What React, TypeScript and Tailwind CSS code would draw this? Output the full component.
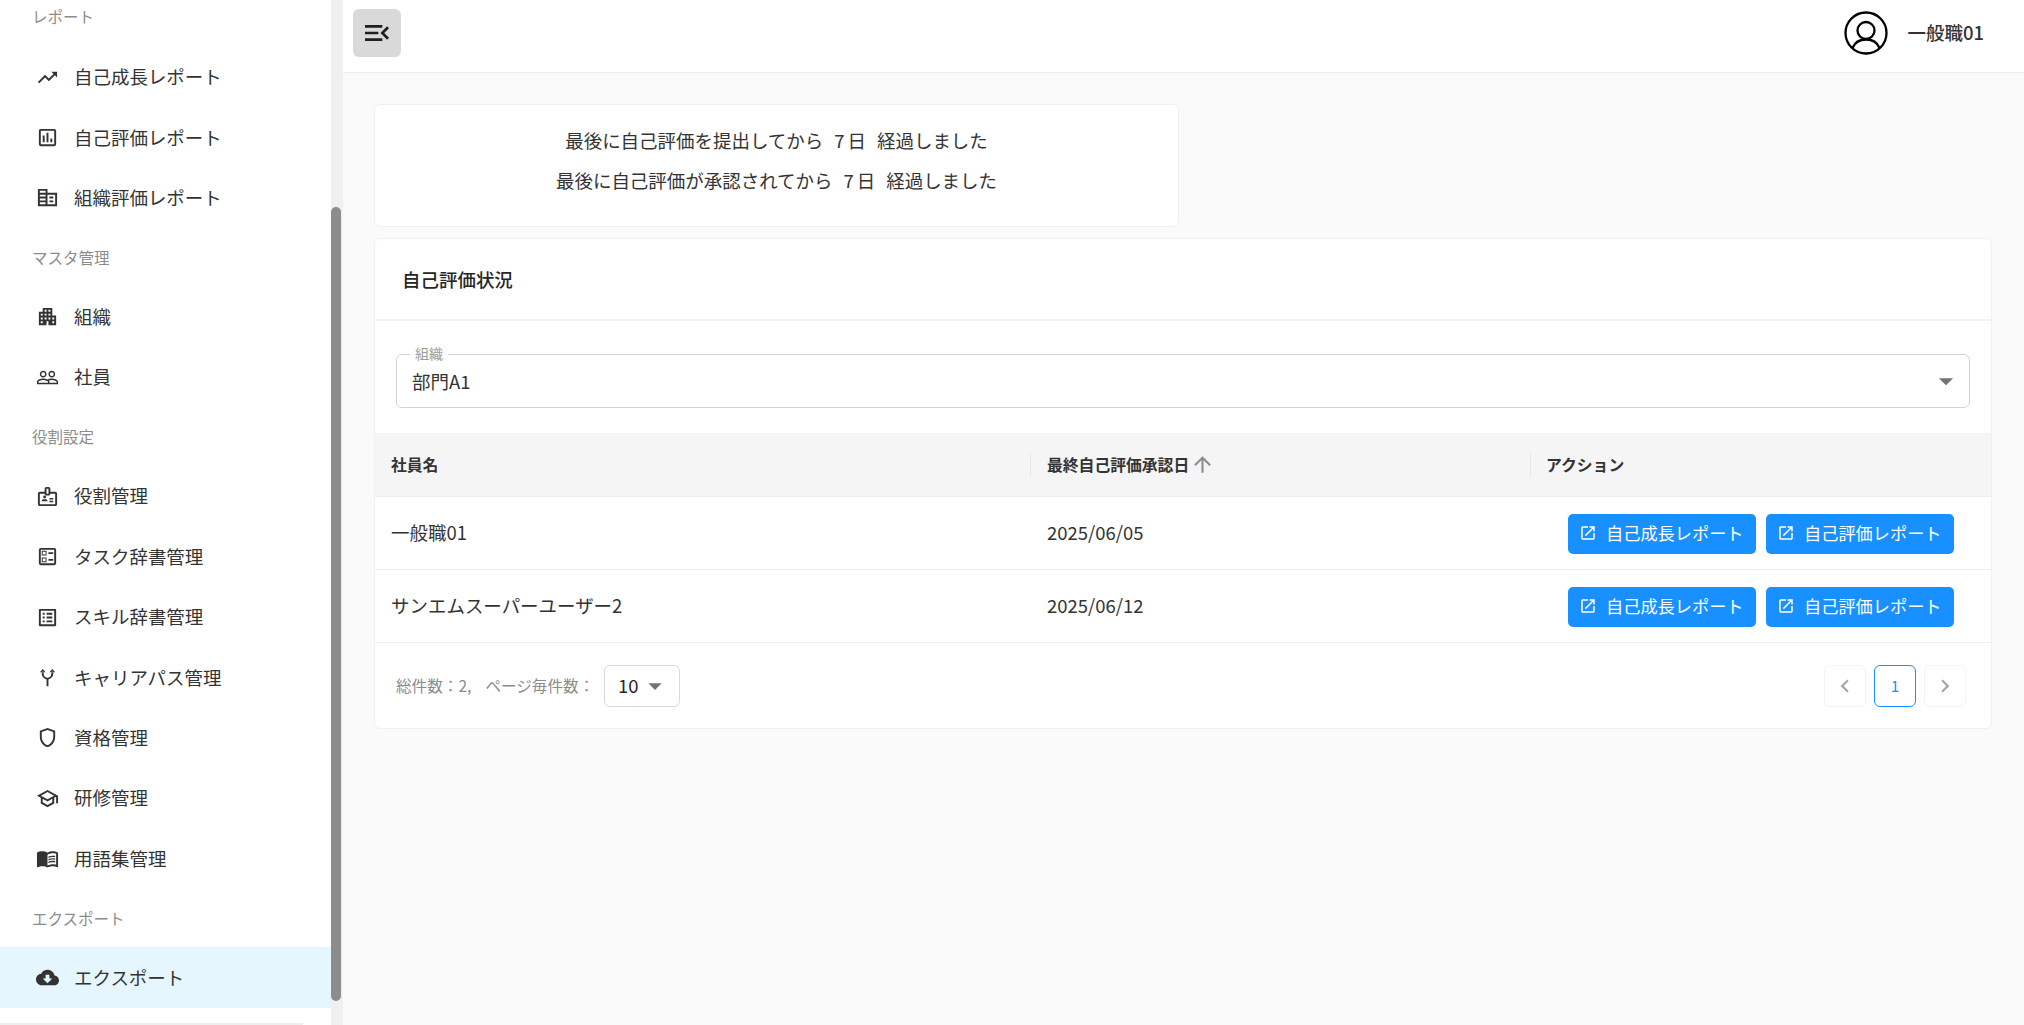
const P: Record<string, string[]> = {
  trend: ["M16 6l2.29 2.29-4.88 4.88-4-4L2 16.59 3.41 18l6-6 4 4 6.3-6.29L22 12V6z"],
  poll: ["M19 3H5c-1.1 0-2 .9-2 2v14c0 1.1.9 2 2 2h14c1.1 0 2-.9 2-2V5c0-1.1-.9-2-2-2zm0 16H5V5h14v14zM7 10h2v7H7zm4-3h2v10h-2zm4 6h2v4h-2z"],
  domain: ["M12 7V3H2v18h20V7H12zM10 19H4v-2h6v2zm0-4H4v-2h6v2zm0-4H4V9h6v2zm0-4H4V5h6v2zm10 12h-8V9h8v10zm-2-8h-4v2h4v-2zm0 4h-4v2h4v-2z"],
  apartment: ["M17 11V3H7v4H3v14h8v-4h2v4h8V11h-4zM7 19H5v-2h2v2zm0-4H5v-2h2v2zm0-4H5V9h2v2zm4 4H9v-2h2v2zm0-4H9V9h2v2zm0-4H9V5h2v2zm4 8h-2v-2h2v2zm0-4h-2V9h2v2zm0-4h-2V5h2v2zm4 12h-2v-2h2v2zm0-4h-2v-2h2v2z"],
  people: ["M16.5 13c-1.2 0-3.07.34-4.5 1-1.43-.67-3.3-1-4.5-1C5.33 13 1 14.08 1 16.25V19h22v-2.75c0-2.17-4.33-3.25-6.5-3.25zm-4 4.5h-10v-1.25c0-.54 2.56-1.75 5-1.75s5 1.21 5 1.75v1.25zm9 0H14v-1.25c0-.46-.2-.86-.52-1.22.88-.3 1.96-.53 3.02-.53 2.44 0 5 1.21 5 1.75v1.25zM7.5 12c1.93 0 3.5-1.57 3.5-3.5S9.43 5 7.5 5 4 6.57 4 8.5 5.57 12 7.5 12zm0-5.5c1.1 0 2 .9 2 2s-.9 2-2 2-2-.9-2-2 .9-2 2-2zm9 5.5c1.93 0 3.5-1.57 3.5-3.5S18.43 5 16.5 5 13 6.57 13 8.5s1.57 3.5 3.5 3.5zm0-5.5c1.1 0 2 .9 2 2s-.9 2-2 2-2-.9-2-2 .9-2 2-2z"],
  badge: ["M20 7h-5V4c0-1.1-.9-2-2-2h-2c-1.1 0-2 .9-2 2v3H4c-1.1 0-2 .9-2 2v11c0 1.1.9 2 2 2h16c1.1 0 2-.9 2-2V9c0-1.1-.9-2-2-2zM11 4h2v5h-2V4zm9 16H4V9h5c0 1.1.9 2 2 2h2c1.1 0 2-.9 2-2h5v11zm-11-6c.83 0 1.5-.67 1.5-1.5S9.83 11 9 11s-1.5.67-1.5 1.5S8.17 14 9 14zm2.08 1.18c-.64-.28-1.34-.43-2.08-.43s-1.44.15-2.08.43C6.36 15.42 6 15.96 6 16.57V17h6v-.43c0-.61-.36-1.15-.92-1.39zM18 13.5h-4V15h4v-1.5zm0 3h-4V18h4v-1.5z"],
  ballot: ["M13 9.5h5v-2h-5v2zm0 7h5v-2h-5v2zm6 4.5H5c-1.1 0-2-.9-2-2V5c0-1.1.9-2 2-2h14c1.1 0 2 .9 2 2v14c0 1.1-.9 2-2 2zM5 19h14V5H5v14zM11 6H6v5h5V6zm-1 4H7V7h3v3zm1 3H6v5h5v-5zm-1 4H7v-3h3v3z"],
  list: ["M19 5v14H5V5h14m1.1-2H3.9c-.5 0-.9.4-.9.9v16.2c0 .4.4.9.9.9h16.2c.4 0 .9-.5.9-.9V3.9c0-.5-.5-.9-.9-.9zM11 7h6v2h-6V7zm0 4h6v2h-6v-2zm0 4h6v2h-6zM7 7h2v2H7zm0 4h2v2H7zm0 4h2v2H7z"],
  fork: ["M7 3l3 3.5H4zM17 3l3 3.5h-6zM6 6v2c0 3 2 5 5 6v7h2v-7c3-1 5-3 5-6V6h-2v2c0 2.5-2 4.2-4 4.2S8 10.5 8 8V6z"],
  shield: ["M12 2 4 5v6.09c0 5.05 3.41 9.76 8 10.91 4.59-1.15 8-5.86 8-10.91V5l-8-3zm6 9.09c0 4-2.55 7.7-6 8.83-3.45-1.13-6-4.82-6-8.83v-4.7l6-2.25 6 2.25v4.7z"],
  school: ["M12 3 1 9l4 2.18v6L12 21l7-3.82v-6l2-1.09V17h2V9L12 3zm6.82 6L12 12.72 5.18 9 12 5.28 18.82 9zM17 15.99l-5 2.73-5-2.73v-3.72L12 15l5-2.73v3.72z"],
  book: ["M21 5c-1.11-.35-2.33-.5-3.5-.5-1.95 0-4.05.4-5.5 1.5-1.45-1.1-3.55-1.5-5.5-1.5S2.45 4.9 1 6v14.65c0 .25.25.5.5.5.1 0 .15-.05.25-.05C3.1 20.45 5.05 20 6.5 20c1.95 0 4.05.4 5.5 1.5 1.35-.85 3.8-1.5 5.5-1.5 1.65 0 3.35.3 4.75 1.05.1.05.15.05.25.05.25 0 .5-.25.5-.5V6c-.6-.45-1.25-.75-2-1zm0 13.5c-1.1-.35-2.3-.5-3.5-.5-1.7 0-4.15.65-5.5 1.5V8c1.35-.85 3.8-1.5 5.5-1.5 1.2 0 2.4.15 3.5.5v11.5z", "M17.5 10.5c.88 0 1.73.09 2.5.26V9.24c-.79-.15-1.64-.24-2.5-.24-1.7 0-3.24.29-4.5.83v1.66c1.13-.64 2.7-.99 4.5-.99zM13 12.49v1.66c1.13-.64 2.7-.99 4.5-.99.88 0 1.73.09 2.5.26V11.9c-.79-.15-1.64-.24-2.5-.24-1.7 0-3.24.3-4.5.83zM17.5 14.33c-1.7 0-3.24.29-4.5.83v1.66c1.13-.64 2.7-.99 4.5-.99.88 0 1.73.09 2.5.26v-1.52c-.79-.16-1.64-.24-2.5-.24z"],
  cloud: ["M19.35 10.04C18.67 6.59 15.64 4 12 4 9.11 4 6.6 5.64 5.35 8.04 2.34 8.36 0 10.91 0 14c0 3.31 2.69 6 6 6h13c2.76 0 5-2.24 5-5 0-2.64-2.05-4.78-4.65-4.96zM17 13l-5 5-5-5h3V9h4v4h3z"],
  menuOpen: ["M3 18h13v-2H3v2zm0-5h10v-2H3v2zm0-7v2h13V6H3zm18 9.59L17.42 12 21 8.41 19.59 7l-5 5 5 5L21 15.59z"],
  open: ["M19 19H5V5h7V3H5c-1.11 0-2 .9-2 2v14c0 1.1.89 2 2 2h14c1.1 0 2-.9 2-2v-7h-2v7zM14 3v2h3.59l-9.83 9.83 1.41 1.41L19 6.41V10h2V3h-7z"],
  up: ["M4 12l1.41 1.41L11 7.83V20h2V7.83l5.58 5.59L20 12l-8-8-8 8z"],
  drop: ["M7 10l5 5 5-5z"],
  left: ["M15.41 7.41 14 6l-6 6 6 6 1.41-1.41L10.83 12z"],
  right: ["M10 6 8.59 7.41 13.17 12l-4.58 4.59L10 18l6-6z"],
};

function Icon({ name, className }: { name: string; className: string }) {
  return (
    <svg viewBox="0 0 24 24" fill="currentColor" className={className}>
      {P[name].map((d) => (
        <path key={d} d={d} />
      ))}
    </svg>
  );
}

function Item({ icon, label, active }: { icon: string; label: string; active?: boolean }) {
  return (
    <div className={`flex h-[60.4px] items-center pl-[36px] ${active ? "bg-[#e6f6ff]" : ""}`}>
      <Icon name={icon} className="h-[23px] w-[23px] shrink-0 text-[#333333]" />
      <span className="ml-[15px] text-[18.48px] text-[#333333]">{label}</span>
    </div>
  );
}

function Section({ label }: { label: string }) {
  return (
    <div className="flex h-[58.6px] items-center pl-[32px] text-[15.5px] text-[#8c8c8c]">{label}</div>
  );
}

function ReportButton({ label }: { label: string }) {
  return (
    <button className="flex h-[40px] w-[188px] items-center gap-[9px] rounded-[5px] bg-[#1890ff] pb-[1px] pl-[11px] text-[17.2px] text-white">
      <Icon name="open" className="h-[18px] w-[18px]" />
      {label}
    </button>
  );
}

function Row({ name, date }: { name: string; date: string }) {
  return (
    <div className="flex h-[73px] items-center border-b border-[#ececec] text-[18.48px] text-[#333333]">
      <div className="w-[656px] pl-[16px]">{name}</div>
      <div className="w-[500px] pl-[16px]">{date}</div>
      <div className="mt-[1px] flex flex-1 justify-end gap-[10px] pr-[37px]">
        <ReportButton label="自己成長レポート" />
        <ReportButton label="自己評価レポート" />
      </div>
    </div>
  );
}

function Elapsed({ text }: { text: string }) {
  return (
    <p className="flex">
      {text}
      <span className="mx-[11px] flex gap-[3px]">
        <span>7</span>
        <span>日</span>
      </span>
      経過しました
    </p>
  );
}

export default function App() {
  return (
    <div
      className="flex h-[1025px] w-[2024px] overflow-hidden bg-[#fafafa]"
      style={{ fontFamily: '"Noto Sans CJK JP", "Noto Sans", sans-serif' }}
    >
      <aside className="flex h-full w-[343px] shrink-0 bg-white">
        <nav className="relative h-full w-[331px] shrink-0">
          <div className="flex h-[47px] items-start pl-[32px] text-[15.5px] text-[#8c8c8c]">
            <span className="mt-[5px]">レポート</span>
          </div>
          <Item icon="trend" label="自己成長レポート" />
          <Item icon="poll" label="自己評価レポート" />
          <Item icon="domain" label="組織評価レポート" />
          <Section label="マスタ管理" />
          <Item icon="apartment" label="組織" />
          <Item icon="people" label="社員" />
          <Section label="役割設定" />
          <Item icon="badge" label="役割管理" />
          <Item icon="ballot" label="タスク辞書管理" />
          <Item icon="list" label="スキル辞書管理" />
          <Item icon="fork" label="キャリアパス管理" />
          <Item icon="shield" label="資格管理" />
          <Item icon="school" label="研修管理" />
          <Item icon="book" label="用語集管理" />
          <Section label="エクスポート" />
          <Item icon="cloud" label="エクスポート" active />
          <div className="mt-[15px] h-[2px] w-[303px] bg-[#eeeeee]" />
        </nav>
        <div className="h-full w-[12px] bg-[#f0f0f0]">
          <div className="mt-[207px] h-[794px] w-[10px] rounded-[5px] bg-[#8c8c8c]" />
        </div>
      </aside>

      <div className="flex min-w-0 flex-1 flex-col">
        <header className="flex h-[73px] shrink-0 items-center border-b border-[#eeeeee] bg-white pr-[40px] pb-[6px] pl-[10px]">
          <button className="flex h-[48px] w-[48px] items-center justify-center rounded-[6px] bg-[#d9d9d9] text-[#1f1f1f]">
            <Icon name="menuOpen" className="h-[32px] w-[32px]" />
          </button>
          <div className="ml-auto flex items-center gap-[20px]">
            <svg viewBox="0 0 44 44" fill="none" stroke="black" strokeWidth="2.3" className="h-[44px] w-[44px]">
              <circle cx="22" cy="22" r="20.5" />
              <circle cx="22" cy="19.5" r="8.5" />
              <path d="M8.5 37c2.2-5.5 7.5-8.5 13.5-8.5s11.3 3 13.5 8.5" />
            </svg>
            <span className="text-[18.48px] font-medium text-[#333333]">一般職01</span>
          </div>
        </header>

        <main className="px-[31px] pt-[31px]">
          <div className="flex h-[123px] w-[805px] flex-col items-center rounded-[6px] border border-[#eef0f4] bg-white pt-[16px] text-[18.48px] leading-[39.5px] text-[#333333]">
            <Elapsed text="最後に自己評価を提出してから" />
            <Elapsed text="最後に自己評価が承認されてから" />
          </div>

          <div className="mt-[11px] h-[491px] w-[1618px] rounded-[6px] border border-[#eef0f4] bg-white">
            <div className="flex h-[82px] items-center border-b-2 border-[#f3f3f3] pt-[2px] pl-[27px] text-[18.48px] font-medium text-[#262626]">
              自己評価状況
            </div>
            <div className="px-[21px] pt-[33px] pb-[25px]">
              <div className="relative flex h-[54px] items-center justify-between rounded-[6px] border border-[#d4d4d4] pr-[6px] pl-[15px] text-[18.48px] text-[#333333]">
                <span className="absolute top-[-11px] left-[13px] bg-white px-[5px] text-[14px] leading-[18px] text-[#9a9a9a]">
                  組織
                </span>
                <span className="mt-[2px]">部門A1</span>
                <Icon name="drop" className="h-[34px] w-[34px] text-[#737373]" />
              </div>
            </div>
            <div className="flex h-[64px] items-center border-b border-[#ececec] bg-[#f5f5f5] text-[15.8px] font-bold text-[#333333]">
              <div className="flex h-[24px] w-[656px] items-center border-r border-[#e8e8e8] pl-[16px]">社員名</div>
              <div className="flex h-[24px] w-[500px] items-center gap-[1px] border-r border-[#e8e8e8] pl-[16px]">
                最終自己評価承認日
                <Icon name="up" className="h-[25px] w-[25px] text-[#8c8c8c]" />
              </div>
              <div className="pl-[15px]">アクション</div>
            </div>
            <Row name="一般職01" date="2025/06/05" />
            <Row name="サンエムスーパーユーザー2" date="2025/06/12" />
            <div className="flex h-[85px] items-center pr-[25px] pl-[21px]">
              <span className="flex w-[208px] shrink-0 text-[15.6px] text-[#8c8c8c]">
                <span>総件数：2,</span>
                <span className="ml-[14px]">ページ毎件数：</span>
              </span>
              <div className="flex h-[42px] w-[76px] items-center justify-between rounded-[6px] border border-[#d9d9d9] pr-[8px] pl-[13px] text-[18.48px] text-[#262626]">
                10
                <Icon name="drop" className="h-[32px] w-[32px] text-[#737373]" />
              </div>
              <div className="ml-auto flex items-center gap-[8px]">
                <div className="flex h-[42px] w-[42px] items-center justify-center rounded-[6px] border border-[#f3f3f3] text-[#a6a6a6]">
                  <Icon name="left" className="h-[26px] w-[26px]" />
                </div>
                <div className="flex h-[42px] w-[42px] items-center justify-center rounded-[6px] border border-[#1890ff] text-[15.4px] text-[#1890ff]">
                  1
                </div>
                <div className="flex h-[42px] w-[42px] items-center justify-center rounded-[6px] border border-[#f3f3f3] text-[#a6a6a6]">
                  <Icon name="right" className="h-[26px] w-[26px]" />
                </div>
              </div>
            </div>
          </div>
        </main>
      </div>
    </div>
  );
}
